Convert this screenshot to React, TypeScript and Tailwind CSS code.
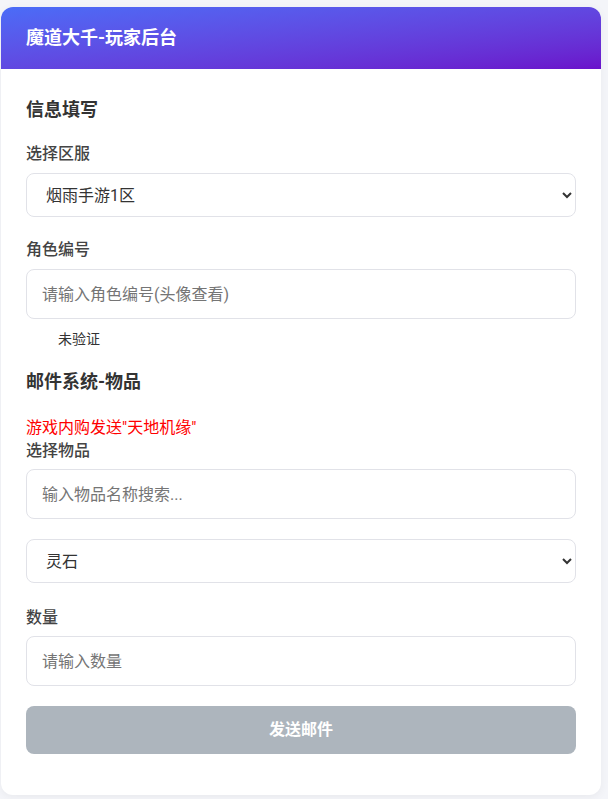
import { useState } from "react";

const font = {
  fontFamily: '"Segoe UI", Roboto, "Noto Sans CJK SC", sans-serif',
};

const servers = ["烟雨手游1区", "烟雨手游2区", "烟雨手游3区"];
const items = ["灵石", "仙玉", "天地机缘"];

export default function App() {
  const [server, setServer] = useState(servers[0]);
  const [item, setItem] = useState(items[0]);
  const [roleId, setRoleId] = useState("");
  const [search, setSearch] = useState("");
  const [count, setCount] = useState("");

  const fieldClass =
    "block w-full rounded-lg border border-[#e1e2e8] bg-white px-[15px] text-base text-[#333] outline-none placeholder:text-[#757575]";

  return (
    <div className="min-h-screen bg-[#f4f5f9] pl-[1px] pt-[7px]" style={font}>
      <div className="w-[600px] overflow-hidden rounded-xl bg-white shadow-[0_2px_10px_rgba(0,0,0,0.05)]">
        <div className="flex h-[62px] items-center bg-gradient-to-br from-[#4a6cf7] to-[#6a11cb] px-[25px]">
          <h1 className="text-lg font-bold text-white">魔道大千-玩家后台</h1>
        </div>

        <div className="px-[25px] pb-[41px] pt-[27px]">
          <h3 className="mb-[20px] text-lg leading-[27px] font-bold text-[#333]">信息填写</h3>

          <div className="mb-[22px]">
            <label className="mb-[8px] block text-base leading-[22px] font-medium text-[#444]">选择区服</label>
            <select
              value={server}
              onChange={(e) => setServer(e.target.value)}
              className={fieldClass + " h-[44px]"}
            >
              {servers.map((s) => (
                <option key={s}>{s}</option>
              ))}
            </select>
          </div>

          <div className="mb-[19px]">
            <label className="mb-[8px] block text-base leading-[22px] font-medium text-[#444]">角色编号</label>
            <input
              value={roleId}
              onChange={(e) => setRoleId(e.target.value)}
              placeholder="请输入角色编号(头像查看)"
              className={fieldClass + " h-[50px]"}
            />
            <div className="mt-[10px] pl-[32px] text-sm leading-5 text-[#333]">未验证</div>
          </div>

          <h3 className="mb-[21px] text-lg leading-[27px] font-bold text-[#333]">邮件系统-物品</h3>

          <div className="text-base leading-6 text-[#ff0000]">游戏内购发送"天地机缘"</div>

          <div className="mb-[20px]">
            <label className="mb-[7px] block text-base leading-[22px] font-medium text-[#444]">选择物品</label>
            <input
              value={search}
              onChange={(e) => setSearch(e.target.value)}
              placeholder="输入物品名称搜索..."
              className={fieldClass + " h-[50px]"}
            />
          </div>

          <div className="mb-[24px]">
            <select
              value={item}
              onChange={(e) => setItem(e.target.value)}
              className={fieldClass + " h-[44px]"}
            >
              {items.map((s) => (
                <option key={s}>{s}</option>
              ))}
            </select>
          </div>

          <div className="mb-[20px]">
            <label className="mb-[7px] block text-base leading-[22px] font-medium text-[#444]">数量</label>
            <input
              value={count}
              onChange={(e) => setCount(e.target.value)}
              placeholder="请输入数量"
              className={fieldClass + " h-[50px]"}
            />
          </div>

          <button
            disabled
            className="block h-[48px] w-full rounded-lg bg-[#adb5bd] text-base font-bold text-white"
          >
            发送邮件
          </button>
        </div>
      </div>
    </div>
  );
}
